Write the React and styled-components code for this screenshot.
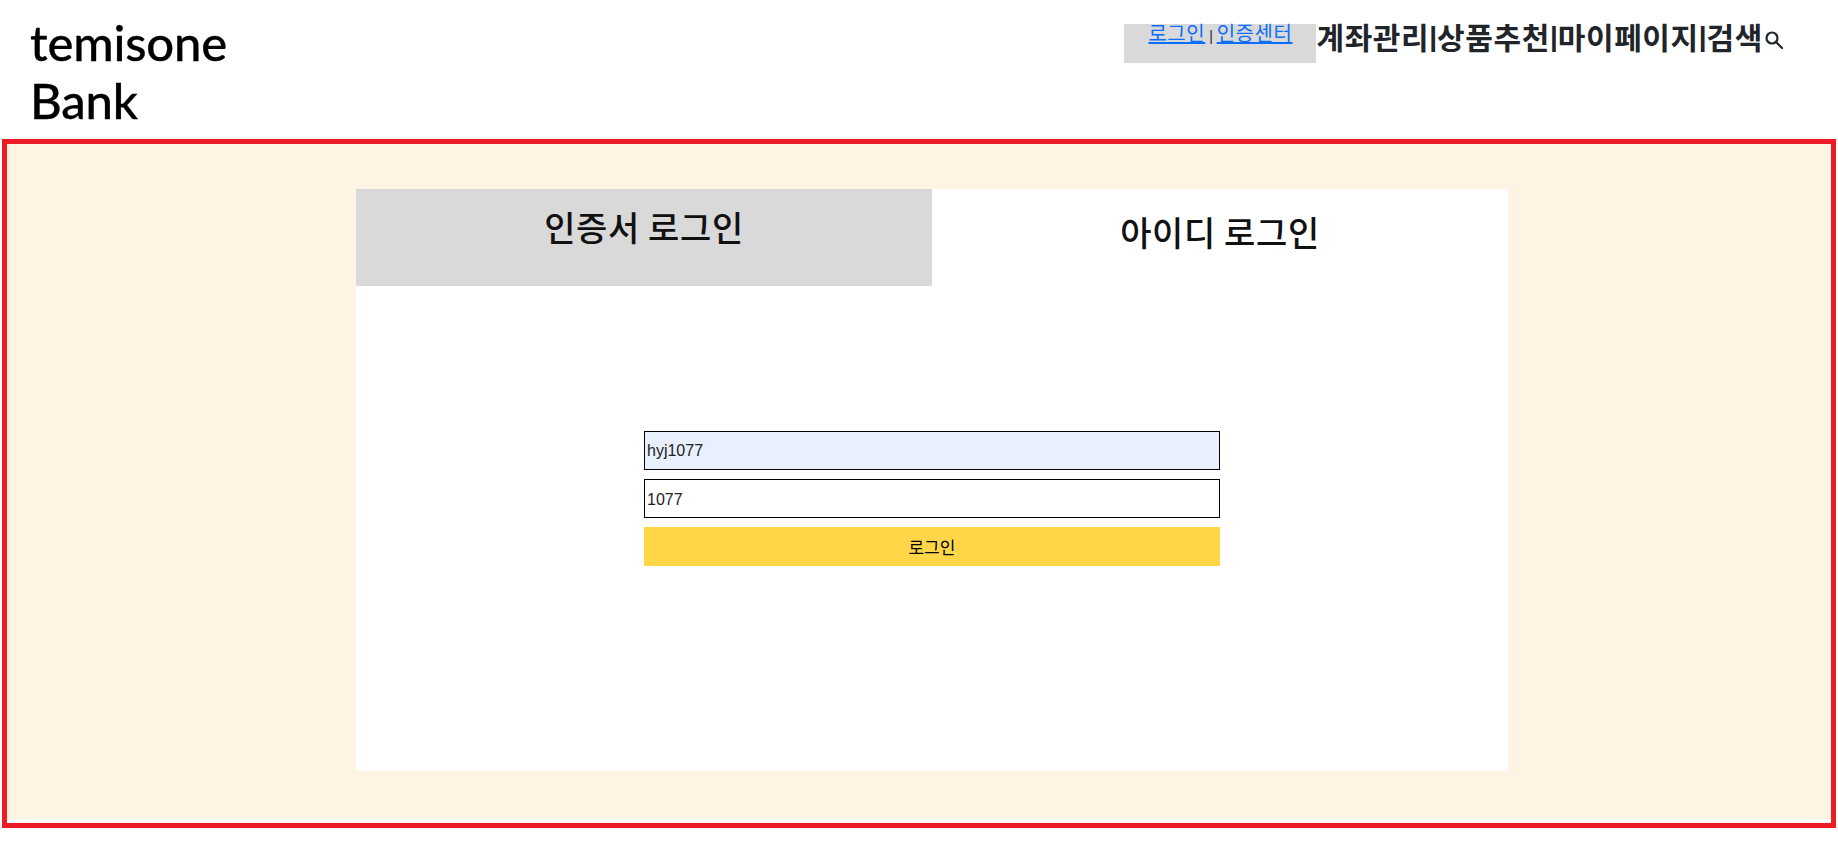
import React from "react";
import styled, { createGlobalStyle } from "styled-components";

const Global = createGlobalStyle`
  html, body { margin: 0; padding: 0; background: #fff; }
  body {
    font-family: "Liberation Sans", "Noto Sans CJK KR", sans-serif;
    color: #212529;
  }
  * { box-sizing: border-box; }
`;

const Header = styled.header`
  display: flex;
  justify-content: space-between;
  align-items: flex-start;
  height: 139px;
  padding: 13px 53px 0 30px;
`;

const Logo = styled.h1`
  margin: 0;
  width: 220px;
  font-family: "Lato", sans-serif;
  font-size: 49px;
  font-weight: 500;
  line-height: 58px;
  letter-spacing: -0.2px;
  -webkit-text-stroke: 0.3px #000;
  color: #000;
`;

const TopRight = styled.div`
  display: flex;
  align-items: flex-start;
  margin-top: 11px;
`;

const AuthBox = styled.div`
  width: 192px;
  height: 39px;
  background: #d9d9d9;
  text-align: center;
  font-size: 14px;
  line-height: 17px;
`;

const AuthLink = styled.a`
  color: #0d6efd;
  text-decoration: underline;
  font-size: 20px;
  letter-spacing: 0.55px;
  font-family: "Noto Sans CJK KR", sans-serif;
`;

const Nav = styled.nav`
  display: flex;
  align-items: center;
  height: 25px;
  font-family: "Noto Sans CJK KR", sans-serif;
  font-size: 30px;
  font-weight: 700;
  line-height: 25px;
  letter-spacing: 0.6px;
  color: #212529;
  white-space: nowrap;
`;

const Divider = styled.span`
  font-weight: 700;
  font-family: "Liberation Sans", sans-serif;
  font-size: 28px;
  letter-spacing: 0;
`;

const SearchIcon = styled.svg`
  width: 22px;
  height: 22px;
  margin: 7px 0 0 0;
  fill: none;
  stroke: #212529;
  stroke-width: 2.2;
  stroke-linecap: round;
`;

const Section = styled.main`
  display: flex;
  justify-content: flex-start;
  margin: 0 2px;
  height: 689px;
  border: 5px solid #ed1c24;
  padding: 45px 0 0 349px;
  background: linear-gradient(#fff4e4, #fff4e4) top / 100% 675px no-repeat, #fff;
`;

const Card = styled.div`
  width: 1152px;
  height: 582px;
  background: #fff;
  display: flex;
  flex-direction: column;
`;

const Tabs = styled.div`
  display: flex;
  height: 97px;
`;

const Tab = styled.div`
  width: 576px;
  height: 97px;
  background: ${(p) => (p.$muted ? "#d9d9d9" : "#fff")};
  padding-top: ${(p) => (p.$muted ? "15px" : "20px")};
  text-align: center;
  font-family: "Noto Sans CJK KR", sans-serif;
  font-size: 34px;
  font-weight: 500;
  line-height: 46px;
  letter-spacing: 0.6px;
  color: #111;
`;

const Form = styled.form`
  width: 576px;
  margin: 145px 0 0 288px;
  display: flex;
  flex-direction: column;
  gap: 9px;
`;

const Field = styled.div`
  height: 39px;
  border: 1px solid #000;
  background: ${(p) => (p.$filled ? "#e8f0fe" : "#fff")};
  padding: ${(p) => (p.$filled ? "0" : "1px")} 0 0 2px;
  font-size: 16px;
  line-height: 37px;
  color: #222;
`;

const Submit = styled.button`
  height: 39px;
  border: 0;
  padding: 0;
  background: #ffd648;
  font-family: "Noto Sans CJK KR", sans-serif;
  font-size: 17px;
  letter-spacing: 0.1px;
  font-weight: 400;
  color: #000;
`;

export default function App() {
  return (
    <>
      <Global />
      <Header>
        <Logo>
          temisone
          <br />
          Bank
        </Logo>
        <TopRight>
          <AuthBox>
            <AuthLink href="#">로그인</AuthLink> | <AuthLink href="#">인증센터</AuthLink>
          </AuthBox>
          <Nav>
            계좌관리<Divider>|</Divider>상품추천<Divider>|</Divider>마이페이지<Divider>|</Divider>검색
            <SearchIcon viewBox="0 0 22 22">
              <circle cx="9" cy="9" r="5.5" />
              <line x1="13" y1="13" x2="19" y2="19" />
            </SearchIcon>
          </Nav>
        </TopRight>
      </Header>
      <Section>
        <Card>
          <Tabs>
            <Tab $muted>인증서 로그인</Tab>
            <Tab>아이디 로그인</Tab>
          </Tabs>
          <Form>
            <Field $filled>hyj1077</Field>
            <Field>1077</Field>
            <Submit type="button">로그인</Submit>
          </Form>
        </Card>
      </Section>
    </>
  );
}
